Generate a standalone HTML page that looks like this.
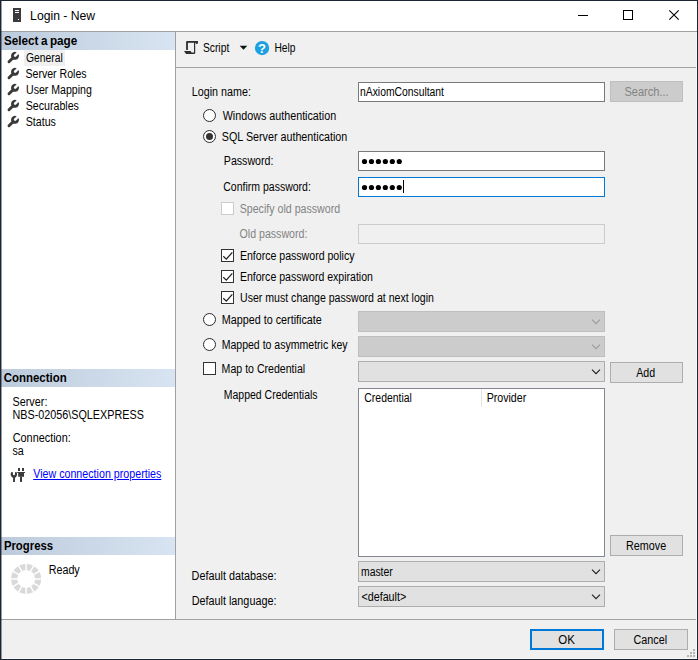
<!DOCTYPE html>
<html><head><meta charset="utf-8"><title>Login - New</title>
<style>
html,body{margin:0;padding:0;}
body{width:698px;height:660px;overflow:hidden;background:#f0f0f0;font-family:"Liberation Sans",sans-serif;font-size:12px;color:#000;position:relative;}
#win{position:absolute;left:0;top:0;width:698px;height:660px;background:#f0f0f0;overflow:hidden;}
.abs{position:absolute;}
.t{position:absolute;white-space:nowrap;line-height:14px;height:14px;transform-origin:0 0;}
.b{font-weight:bold;}
.dis{color:#838383;}
.lnk{color:#0000ff;text-decoration:underline;}
.hl{position:absolute;height:1px;background:#a0a0a0;}
.vl{position:absolute;width:1px;background:#a0a0a0;}
.hdr{position:absolute;left:1px;width:174px;height:18px;background:linear-gradient(90deg,#bccbdc 0%,#d8e4f1 100%);}
.field{position:absolute;box-sizing:border-box;background:#fff;border:1px solid #7a7a7a;left:358px;width:247px;height:20px;}
.btn{position:absolute;box-sizing:border-box;background:#e1e1e1;border:1px solid #adadad;}
.btn.d{background:#cccccc;border-color:#bfbfbf;}
.combo{position:absolute;box-sizing:border-box;background:#e1e1e1;border:1px solid #adadad;left:358px;width:247px;height:21px;}
.combo.d{background:#cccccc;border-color:#bfbfbf;}
.radio{position:absolute;box-sizing:border-box;width:13px;height:13px;border-radius:50%;border:1px solid #2b2b2b;background:#fff;left:203px;}
.cb{position:absolute;box-sizing:border-box;width:13px;height:13px;border:1px solid #333;background:#fff;left:221px;}
.cb.d{border-color:#cccccc;}
svg{position:absolute;overflow:visible;}
#ico{left:0;top:0;}
</style></head><body>
<div id="win">
<div class="abs" style="left:0;top:0;width:698px;height:31px;background:#fff"></div>
<div class="hl" style="left:0;top:31px;width:698px"></div>
<!-- left panel -->
<div class="abs" style="left:0;top:32px;width:175px;height:587px;background:#fff"></div>
<div class="vl" style="left:175px;top:32px;height:587px"></div>
<div class="hdr" style="top:32px"></div>
<div class="abs" style="left:24px;top:50px;width:41px;height:16px;background:#f0f0f0"></div>
<div class="hdr" style="top:369px"></div>
<div class="hdr" style="top:537px"></div>
<div class="hl" style="left:0;top:619px;width:698px"></div>
<div class="hl" style="left:176px;top:67px;width:522px"></div>

<!-- form controls -->
<div class="field" style="top:82px"></div>
<div class="btn d" style="left:610px;top:81px;width:73px;height:21px"></div>
<div class="radio" style="top:109px"></div>
<div class="radio" style="top:130px"></div>
<div class="abs" style="left:206px;top:133px;width:7px;height:7px;border-radius:50%;background:#333"></div>
<div class="field" style="top:151px"></div>
<div class="field" style="top:177px;border-color:#0078d7"></div>
<div class="abs" style="left:403px;top:180px;width:1px;height:13px;background:#000"></div>
<div class="cb d" style="top:202px"></div>
<div class="field" style="top:224px;background:#f0f0f0;border-color:#cccccc"></div>
<div class="cb" style="top:249px"></div>
<div class="cb" style="top:270px"></div>
<div class="cb" style="top:291px"></div>
<div class="radio" style="top:313px"></div>
<div class="combo d" style="top:311px"></div>
<div class="radio" style="top:338px"></div>
<div class="combo d" style="top:336px"></div>
<div class="cb" style="left:203px;top:362px"></div>
<div class="combo" style="top:361px"></div>
<div class="btn" style="left:610px;top:362px;width:73px;height:21px"></div>
<div class="field" style="top:388px;height:169px;border-color:#828790"></div>
<div class="vl" style="left:481px;top:389px;height:18px;background:#e5e5e5"></div>
<div class="btn" style="left:610px;top:535px;width:73px;height:21px"></div>
<div class="combo" style="top:561px"></div>
<div class="combo" style="top:586px"></div>
<div class="btn" style="left:530px;top:629px;width:74px;height:21px;border:2px solid #0078d7"></div>
<div class="btn" style="left:614px;top:629px;width:74px;height:21px"></div>

<!-- icons (page coordinates) -->
<svg id="ico" width="698" height="660" viewBox="0 0 698 660">
<!-- title icon -->
<rect x="13" y="8" width="8" height="14" fill="#3b3b3b"/><rect x="15" y="10" width="4" height="1" fill="#fff"/><rect x="15" y="12" width="4" height="1" fill="#fff"/><rect x="18" y="19" width="1" height="1" fill="#fff"/>
<!-- window controls -->
<rect x="578" y="15" width="10" height="1" fill="#000"/>
<rect x="623.5" y="10.5" width="9" height="9" fill="none" stroke="#000" stroke-width="1"/>
<path d="M669.3 10.3L678.7 19.7M678.7 10.3L669.3 19.7" stroke="#000" stroke-width="1.1" fill="none"/>
<!-- wrenches -->
<g transform="translate(7 51)"><path d="M9.75 1.2L7.22 3.74A1.3 1.3 0 0 0 9.06 5.58L11.6 3.05A4 4 0 1 1 9.75 1.2Z" fill="#3a3a3a"/><path d="M5.6 7.2L2 10.8" stroke="#3a3a3a" stroke-width="2.9" stroke-linecap="round" fill="none"/></g><g transform="translate(7 67)"><path d="M9.75 1.2L7.22 3.74A1.3 1.3 0 0 0 9.06 5.58L11.6 3.05A4 4 0 1 1 9.75 1.2Z" fill="#3a3a3a"/><path d="M5.6 7.2L2 10.8" stroke="#3a3a3a" stroke-width="2.9" stroke-linecap="round" fill="none"/></g><g transform="translate(7 83)"><path d="M9.75 1.2L7.22 3.74A1.3 1.3 0 0 0 9.06 5.58L11.6 3.05A4 4 0 1 1 9.75 1.2Z" fill="#3a3a3a"/><path d="M5.6 7.2L2 10.8" stroke="#3a3a3a" stroke-width="2.9" stroke-linecap="round" fill="none"/></g><g transform="translate(7 99)"><path d="M9.75 1.2L7.22 3.74A1.3 1.3 0 0 0 9.06 5.58L11.6 3.05A4 4 0 1 1 9.75 1.2Z" fill="#3a3a3a"/><path d="M5.6 7.2L2 10.8" stroke="#3a3a3a" stroke-width="2.9" stroke-linecap="round" fill="none"/></g><g transform="translate(7 115)"><path d="M9.75 1.2L7.22 3.74A1.3 1.3 0 0 0 9.06 5.58L11.6 3.05A4 4 0 1 1 9.75 1.2Z" fill="#3a3a3a"/><path d="M5.6 7.2L2 10.8" stroke="#3a3a3a" stroke-width="2.9" stroke-linecap="round" fill="none"/></g>
<!-- script icon -->
<g fill="#2e2e2e"><rect x="186.1" y="41.6" width="1.8" height="8.4"/><rect x="186.6" y="41" width="11.2" height="1.8"/><rect x="195.8" y="41" width="2" height="2.9"/><rect x="194" y="42" width="1.2" height="11"/><path d="M184 51.1H190.6L191.6 52.6H195.2V53.3L194.4 53.9H186Z"/></g>
<path d="M239.7 45.7H247.3L243.5 49.8Z" fill="#111"/>
<!-- help -->
<circle cx="262.05" cy="48.05" r="7.15" fill="#1ba1e2"/>
<text x="262" y="52.6" font-family="Liberation Sans, sans-serif" font-weight="bold" font-size="13" fill="#fff" text-anchor="middle">?</text>
<!-- password dots -->
<g fill="#000"><circle cx="364.5" cy="161.5" r="2.6"/><circle cx="371.45" cy="161.5" r="2.6"/><circle cx="378.4" cy="161.5" r="2.6"/><circle cx="385.35" cy="161.5" r="2.6"/><circle cx="392.3" cy="161.5" r="2.6"/><circle cx="399.25" cy="161.5" r="2.6"/>
<circle cx="364.5" cy="187.5" r="2.6"/><circle cx="371.45" cy="187.5" r="2.6"/><circle cx="378.4" cy="187.5" r="2.6"/><circle cx="385.35" cy="187.5" r="2.6"/><circle cx="392.3" cy="187.5" r="2.6"/><circle cx="399.25" cy="187.5" r="2.6"/></g>
<!-- checks -->
<path transform="translate(221 249)" d="M2.3 7.2L5.3 10.1L11.3 3.4" fill="none" stroke="#222" stroke-width="1.3"/><path transform="translate(221 270)" d="M2.3 7.2L5.3 10.1L11.3 3.4" fill="none" stroke="#222" stroke-width="1.3"/><path transform="translate(221 291)" d="M2.3 7.2L5.3 10.1L11.3 3.4" fill="none" stroke="#222" stroke-width="1.3"/>
<!-- chevrons -->
<g stroke-width="1.2"><path transform="translate(596 321.9)" d="M-4 -2.2L0 1.8L4 -2.2" fill="none" stroke="#9d9d9d"/><path transform="translate(596 346.9)" d="M-4 -2.2L0 1.8L4 -2.2" fill="none" stroke="#9d9d9d"/></g><g stroke-width="1.05"><path transform="translate(596 371.9)" d="M-4 -2.2L0 1.8L4 -2.2" fill="none" stroke="#1a1a1a"/><path transform="translate(596 571.9)" d="M-4 -2.2L0 1.8L4 -2.2" fill="none" stroke="#1a1a1a"/><path transform="translate(596 596.9)" d="M-4 -2.2L0 1.8L4 -2.2" fill="none" stroke="#1a1a1a"/></g>
<!-- plug icon -->
<g fill="#3a3a3a"><rect x="18" y="468" width="2" height="3"/><rect x="22" y="468" width="2" height="3"/><rect x="17.2" y="472" width="7.8" height="1"/><rect x="18.2" y="473" width="5.8" height="3.8"/><rect x="20" y="476.8" width="2" height="5.1"/>
<path d="M11.5 472C10.3 473.5 10.3 476.4 13.1 477.8V481.9H15V477.8C17.5 476.4 17.5 473.5 16.3 472L15 472.3V474.3A1.05 1.05 0 0 1 12.9 474.3V472.3Z"/></g>
<!-- spinner -->
<circle cx="26.15" cy="578.90" r="12" fill="none" stroke="#d9d9d9" stroke-width="6"/>
<g stroke="#fff" stroke-width="1.5" fill="none"><path d="M43.15 578.90L9.15 578.90"/><path d="M40.87 587.40L11.43 570.40"/><path d="M34.65 593.62L17.65 564.18"/><path d="M26.15 595.90L26.15 561.90"/><path d="M17.65 593.62L34.65 564.18"/><path d="M11.43 587.40L40.87 570.40"/></g>
<!-- grip -->
<g fill="#b4b4b4"><rect x="693" y="649" width="2" height="2"/><rect x="690" y="652" width="2" height="2"/><rect x="693" y="652" width="2" height="2"/><rect x="687" y="655" width="2" height="2"/><rect x="690" y="655" width="2" height="2"/><rect x="693" y="655" width="2" height="2"/></g>
</svg>

<div class="t " id="ttl" style="left:30px;top:9px;transform:translateX(0.11px) scaleX(1.0150)">Login - New</div>
<div class="t b" id="h1" style="left:3px;top:34px;transform:translateX(0.99px) scaleX(0.9750);word-spacing:-0.77px">Select a page</div>
<div class="t " id="p1" style="left:25px;top:51px;transform:translateX(0.93px) scaleX(0.8616)">General</div>
<div class="t " id="p2" style="left:25px;top:67px;transform:translateX(0.46px) scaleX(0.8817)">Server Roles</div>
<div class="t " id="p3" style="left:25px;top:83px;transform:translateX(0.99px) scaleX(0.8814)">User Mapping</div>
<div class="t " id="p4" style="left:25px;top:99px;transform:translateX(0.70px) scaleX(0.8857)">Securables</div>
<div class="t " id="p5" style="left:25px;top:115px;transform:translateX(0.72px) scaleX(0.8868)">Status</div>
<div class="t b" id="h2" style="left:3px;top:371px;transform:translateX(0.83px) scaleX(0.9518)">Connection</div>
<div class="t " id="c1" style="left:12px;top:395px;transform:translateX(0.56px) scaleX(0.9002)">Server:</div>
<div class="t " id="c2" style="left:12px;top:408px;transform:translateX(0.46px) scaleX(0.8993)">NBS-02056\SQLEXPRESS</div>
<div class="t " id="c3" style="left:12px;top:431px;transform:translateX(0.72px) scaleX(0.9058)">Connection:</div>
<div class="t " id="c4" style="left:12px;top:444px;transform:translateX(0.47px) scaleX(0.8950)">sa</div>
<div class="t lnk" id="c5" style="left:33px;top:467px;transform:translateX(0.20px) scaleX(0.8906)">View connection properties</div>
<div class="t b" id="h3" style="left:3px;top:539px;transform:translateX(0.89px) scaleX(0.9455)">Progress</div>
<div class="t " id="r1" style="left:48px;top:563px;transform:translateX(0.68px) scaleX(0.8954)">Ready</div>
<div class="t " id="s1" style="left:202px;top:41px;transform:translateX(0.89px) scaleX(0.8599)">Script</div>
<div class="t " id="s2" style="left:274px;top:41px;transform:translateX(0.47px) scaleX(0.8529)">Help</div>
<div class="t " id="f1" style="left:191px;top:85px;transform:translateX(0.82px) scaleX(0.8947)">Login name:</div>
<div class="t " id="f2" style="left:360px;top:85px;transform:translateX(0.02px) scaleX(0.8622)">nAxiomConsultant</div>
<div class="t dis" id="f3" style="left:624px;top:85px;transform:translateX(0.42px) scaleX(0.9205)">Search...</div>
<div class="t " id="f4" style="left:222px;top:109px;transform:translateX(0.72px) scaleX(0.8951)">Windows authentication</div>
<div class="t " id="f5" style="left:221px;top:130px;transform:translateX(0.87px) scaleX(0.8936)">SQL Server authentication</div>
<div class="t " id="f6" style="left:223px;top:154px;transform:translateX(0.80px) scaleX(0.8855)">Password:</div>
<div class="t " id="f7" style="left:223px;top:180px;transform:translateX(0.24px) scaleX(0.8762)">Confirm password:</div>
<div class="t dis" id="f8" style="left:239px;top:202px;transform:translateX(0.65px) scaleX(0.8863)">Specify old password</div>
<div class="t dis" id="f9" style="left:239px;top:227px;transform:translateX(0.55px) scaleX(0.8842)">Old password:</div>
<div class="t " id="f10" style="left:239px;top:249px;transform:translateX(0.88px) scaleX(0.8814)">Enforce password policy</div>
<div class="t " id="f11" style="left:239px;top:270px;transform:translateX(0.92px) scaleX(0.8783)">Enforce password expiration</div>
<div class="t " id="f12" style="left:239px;top:291px;transform:translateX(0.99px) scaleX(0.8811)">User must change password at next login</div>
<div class="t " id="f13" style="left:221px;top:313px;transform:translateX(0.69px) scaleX(0.8987)">Mapped to certificate</div>
<div class="t " id="f14" style="left:221px;top:338px;transform:translateX(0.63px) scaleX(0.8781)">Mapped to asymmetric key</div>
<div class="t " id="f15" style="left:221px;top:362px;transform:translateX(0.62px) scaleX(0.8816)">Map to Credential</div>
<div class="t " id="f16" style="left:636px;top:366px;transform:translateX(0.27px) scaleX(0.8864)">Add</div>
<div class="t " id="f17" style="left:223px;top:388px;transform:translateX(0.79px) scaleX(0.8733)">Mapped Credentials</div>
<div class="t " id="f18" style="left:364px;top:391px;transform:translateX(0.33px) scaleX(0.8694)">Credential</div>
<div class="t " id="f19" style="left:486px;top:391px;transform:translateX(0.64px) scaleX(0.8847)">Provider</div>
<div class="t " id="f20" style="left:625px;top:539px;transform:translateX(0.97px) scaleX(0.8993)">Remove</div>
<div class="t " id="f21" style="left:191px;top:569px;transform:translateX(0.62px) scaleX(0.9015)">Default database:</div>
<div class="t " id="f22" style="left:361px;top:565px;transform:translateX(0.00px) scaleX(0.8653)">master</div>
<div class="t " id="f23" style="left:191px;top:594px;transform:translateX(0.63px) scaleX(0.9017)">Default language:</div>
<div class="t " id="f24" style="left:361px;top:590px;transform:translateX(0.40px) scaleX(0.8966)">&lt;default&gt;</div>
<div class="t " id="f25" style="left:558px;top:633px;transform:translateX(0.24px) scaleX(0.9562)">OK</div>
<div class="t " id="f26" style="left:633px;top:633px;transform:translateX(0.40px) scaleX(0.9005)">Cancel</div>

<!-- window border -->
<div class="abs" style="left:696px;top:32px;width:1px;height:627px;background:#f8f8f8"></div>
<div class="abs" style="left:2px;top:658px;width:695px;height:1px;background:#f8f8f8"></div>
<div class="abs" style="left:0;top:0;width:698px;height:1px;background:#1d2433"></div>
<div class="abs" style="left:0;top:0;width:1px;height:660px;background:#1d2433"></div>
<div class="abs" style="left:1px;top:1px;width:1px;height:658px;background:rgba(29,36,51,0.45)"></div>
<div class="abs" style="left:697px;top:0;width:1px;height:660px;background:#1d2433"></div>
<div class="abs" style="left:0;top:659px;width:698px;height:1px;background:#1d2433"></div>
</div>
</body></html>
